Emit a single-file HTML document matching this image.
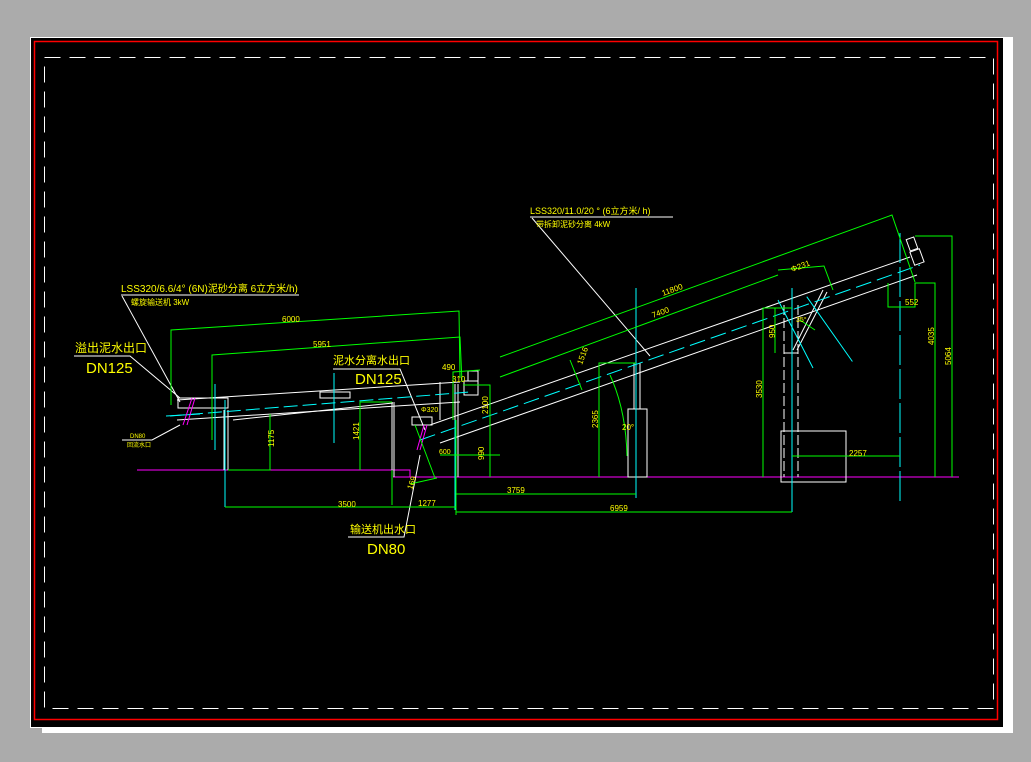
<!DOCTYPE html>
<html><head><meta charset="utf-8"><style>
html,body{margin:0;padding:0;background:#ababab;width:1031px;height:762px;overflow:hidden}
svg{position:absolute;left:0;top:0}
text{font-family:"Liberation Sans","Noto Sans CJK SC",sans-serif;fill:#ffff00}
</style></head><body>
<svg width="1031" height="762" viewBox="0 0 1031 762">
<rect x="42" y="48" width="971" height="685" fill="#fff"/>
<rect x="30" y="37" width="983" height="691" fill="#fff"/>
<rect x="31" y="38" width="972" height="689" fill="#000"/>
<rect x="34.5" y="41.5" width="963" height="678" fill="none" stroke="#ff0000" stroke-width="1.5"/>
<rect x="44.5" y="57.5" width="949" height="651" fill="none" stroke="#fff" stroke-width="1" stroke-dasharray="16,9"/>

<g fill="none" stroke-width="1">
<polyline points="137,470 410,470 410,477" stroke="#ff00ff"/>
<line x1="393" y1="477" x2="959" y2="477" stroke="#ff00ff"/>

<g stroke="#fff">
<line x1="177" y1="400" x2="460" y2="382"/>
<line x1="177" y1="420" x2="460" y2="402"/>
<line x1="233" y1="420" x2="393" y2="403"/>
<rect x="320" y="392" width="30" height="6"/>
<rect x="178" y="398" width="50" height="10"/>
<line x1="224" y1="410" x2="224" y2="470"/><line x1="228" y1="410" x2="228" y2="470"/>
<line x1="392" y1="402" x2="392" y2="477"/><line x1="394" y1="402" x2="394" y2="477"/>
<polyline points="122,296 180,402"/>
<polyline points="74,356 130,356 180,398"/>
<polyline points="122,440 152,440 180,425"/>
<polyline points="333,369 400,369 425,430"/>
<polyline points="348,537 404,537 420,455"/>
<polyline points="121,295 299,295"/>
<polyline points="530,217 673,217"/>
<line x1="532" y1="218" x2="650" y2="356"/>
<line x1="430" y1="425" x2="910" y2="257"/>
<line x1="440" y1="443" x2="917" y2="275"/>
<rect x="628" y="409" width="19" height="68"/>
<line x1="634" y1="363" x2="634" y2="409"/><line x1="640" y1="363" x2="640" y2="409"/>
<line x1="784" y1="305" x2="784" y2="477" stroke-dasharray="10,3"/>
<line x1="798" y1="305" x2="798" y2="477" stroke-dasharray="10,3"/>
<rect x="781" y="431" width="65" height="51"/>
<line x1="784" y1="353" x2="798" y2="353"/>
<line x1="793" y1="350" x2="823" y2="290"/><line x1="797" y1="350" x2="827" y2="292"/>
<rect x="908" y="238" width="8" height="12" transform="rotate(-20 912 244)"/>
<rect x="912" y="250" width="10" height="14" transform="rotate(-20 917 257)"/>
<rect x="468" y="371" width="10" height="10"/>
<rect x="464" y="381" width="14" height="14"/>
<line x1="455" y1="384" x2="455" y2="477"/><line x1="458" y1="384" x2="458" y2="477"/>
<rect x="412" y="417" width="20" height="8"/>
<line x1="440" y1="382" x2="440" y2="420"/>
</g>

<g stroke="#00ffff">
<line x1="170" y1="416" x2="470" y2="392" stroke-dasharray="14,5"/>
<line x1="420" y1="440" x2="920" y2="265" stroke-dasharray="16,6"/>
<line x1="215" y1="384" x2="215" y2="450"/>
<line x1="225" y1="400" x2="225" y2="507"/>
<line x1="334" y1="373" x2="334" y2="443"/>
<line x1="636" y1="288" x2="636" y2="498"/>
<line x1="792" y1="288" x2="792" y2="512"/>
<line x1="900" y1="233" x2="900" y2="505" stroke-dasharray="30,4"/>
<line x1="166" y1="416" x2="200" y2="414"/>
<line x1="455" y1="420" x2="455" y2="510"/>
<line x1="778" y1="300" x2="813" y2="368"/>
<line x1="823" y1="290" x2="837" y2="368" transform="rotate(-25 830 330)"/>
</g>

<g stroke="#ff00ff"><line x1="183" y1="425" x2="192" y2="398"/><line x1="187" y1="425" x2="195" y2="398"/>
<line x1="417" y1="450" x2="424" y2="425"/><line x1="420" y1="450" x2="427" y2="425"/></g>

<g stroke="#00ff00">
<polyline points="171,405 171,330 459,311 460,378"/>
<polyline points="212,440 212,355 460,337 462,382"/>
<polyline points="225,507 456,507"/>
<line x1="392" y1="505" x2="392" y2="470"/>
<polyline points="456,494 636,494"/><polyline points="456,512 792,512"/>
<line x1="456" y1="420" x2="456" y2="515"/>
<polyline points="228,470 270,470 270,414"/>
<polyline points="360,470 360,402 392,402"/>
<polyline points="490,477 490,385 463,385"/>
<polyline points="453,420 453,372 480,370"/>
<line x1="415" y1="425" x2="435" y2="478"/>
<line x1="410" y1="484" x2="437" y2="478"/>
<line x1="440" y1="455" x2="500" y2="455"/>
<polyline points="500,357 892,215 915,282"/>
<polyline points="500,377 778,275"/>
<polyline points="778,270 824,266 833,290"/>
<polyline points="570,360 582,390"/>
<polyline points="599,477 599,363 636,363"/>
<path d="M610 375 Q626 410 627 456"/>
<polyline points="763,477 763,308 792,308"/>
<polyline points="775,353 775,308"/>
<polyline points="792,456 900,456"/>
<polyline points="888,283 888,307 915,307 915,283 935,283 935,477"/>
<polyline points="915,236 952,236 952,477"/>
<line x1="800" y1="320" x2="815" y2="330"/>
</g>
</g>

<g>
<text x="121" y="292" font-size="10">LSS320/6.6/4° (6N)泥砂分离 6立方米/h)</text>
<text x="131" y="305" font-size="8">螺旋输送机 3kW</text>
<text x="75" y="352" font-size="12">溢出泥水出口</text>
<text x="86" y="373" font-size="15">DN125</text>
<text x="130" y="438" font-size="6">DN80</text>
<text x="127" y="447" font-size="6">回流水口</text>
<text x="282" y="322" font-size="8">6000</text>
<text x="313" y="347" font-size="8">5951</text>
<text x="333" y="364" font-size="11">泥水分离水出口</text>
<text x="355" y="384" font-size="15">DN125</text>
<text x="442" y="370" font-size="8">490</text>
<text x="452" y="382" font-size="8">310</text>
<text x="421" y="412" font-size="7">Φ320</text>
<text x="439" y="454" font-size="7">600</text>
<text x="338" y="507" font-size="8">3500</text>
<text x="418" y="506" font-size="8">1277</text>
<text x="350" y="533" font-size="11">输送机出水口</text>
<text x="367" y="554" font-size="15">DN80</text>
<text x="507" y="493" font-size="8">3759</text>
<text x="610" y="511" font-size="8">6959</text>
<text x="530" y="214" font-size="9">LSS320/11.0/20 ° (6立方米/    h)</text>
<text x="536" y="227" font-size="8">带拆卸泥砂分离 4kW</text>
<text x="663" y="296" font-size="8" transform="rotate(-20 663 296)">11800</text>
<text x="653" y="318" font-size="8" transform="rotate(-20 653 318)">7400</text>
<text x="792" y="272" font-size="8" transform="rotate(-20 792 272)">Φ231</text>
<text x="849" y="456" font-size="8">2257</text>
<text x="905" y="305" font-size="8">552</text>
<text x="622" y="430" font-size="8">20°</text>
<text x="796" y="322" font-size="7">35°</text>
</g>
<g font-size="8">
<text transform="translate(274,447) rotate(-90)">1175</text>
<text transform="translate(359,440) rotate(-90)">1421</text>
<text transform="translate(488,414) rotate(-90)">2100</text>
<text transform="translate(484,460) rotate(-90)">990</text>
<text transform="translate(598,428) rotate(-90)">2365</text>
<text transform="translate(762,398) rotate(-90)">3530</text>
<text transform="translate(775,338) rotate(-90)">950</text>
<text transform="translate(934,345) rotate(-90)">4035</text>
<text transform="translate(951,365) rotate(-90)">5064</text>
<text transform="translate(582,365) rotate(-70)">1516</text>
<text transform="translate(412,490) rotate(-70)">169</text>
</g>
</svg>
</body></html>
